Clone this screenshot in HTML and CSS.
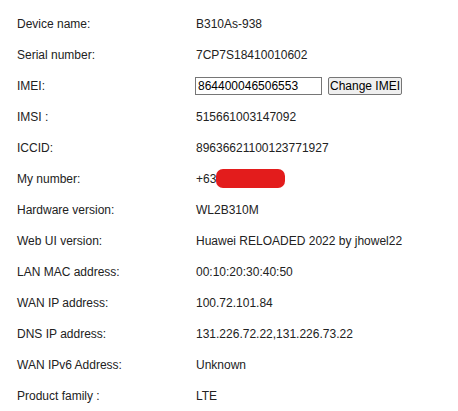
FILE: index.html
```html
<!DOCTYPE html>
<html>
<head>
<meta charset="utf-8">
<link rel="stylesheet" href="styles.css">
</head>
<body>
<div class="info">
  <div class="row"><span class="label">Device name:</span><span class="value">B310As-938</span></div>
  <div class="row"><span class="label">Serial number:</span><span class="value">7CP7S18410010602</span></div>
  <div class="row"><span class="label">IMEI:</span><span class="value imei"><input class="imei-input" type="text" value="864400046506553"><button class="imei-btn">Change IMEI</button></span></div>
  <div class="row"><span class="label">IMSI :</span><span class="value">515661003147092</span></div>
  <div class="row"><span class="label">ICCID:</span><span class="value">89636621100123771927</span></div>
  <div class="row"><span class="label">My number:</span><span class="value">+63<span class="redact"></span></span></div>
  <div class="row"><span class="label">Hardware version:</span><span class="value">WL2B310M</span></div>
  <div class="row"><span class="label">Web UI version:</span><span class="value">Huawei RELOADED 2022 by jhowel22</span></div>
  <div class="row"><span class="label">LAN MAC address:</span><span class="value">00:10:20:30:40:50</span></div>
  <div class="row"><span class="label">WAN IP address:</span><span class="value">100.72.101.84</span></div>
  <div class="row"><span class="label">DNS IP address:</span><span class="value">131.226.72.22,131.226.73.22</span></div>
  <div class="row"><span class="label">WAN IPv6 Address:</span><span class="value">Unknown</span></div>
  <div class="row"><span class="label">Product family :</span><span class="value">LTE</span></div>
</div>
</body>
</html>
```
FILE: styles.css
```css
html, body {
  margin: 0;
  padding: 0;
  background: #fff;
}
body {
  font-family: "Liberation Sans", Arial, sans-serif;
  font-size: 12px;
  color: #222;
}
.info {
  padding: 8px 0 0 17px;
}
.row {
  display: grid;
  grid-template-columns: 179px 1fr;
  align-items: center;
  height: 31px;
}
.value {
  display: flex;
  align-items: center;
}
.imei {
  gap: 6px;
}
.imei-input {
  box-sizing: border-box;
  width: 127px;
  height: 18px;
  margin: 0 0 0 -1px;
  padding: 0 2px;
  border: 1px solid #767676;
  font-family: "Liberation Sans", Arial, sans-serif;
  font-size: 12px;
  color: #000;
}
.imei-btn {
  box-sizing: border-box;
  width: 74px;
  height: 18px;
  margin: 0;
  padding: 0 1px;
  border: 1px solid #767676;
  border-radius: 2px;
  background: #efefef;
  font-family: "Liberation Sans", Arial, sans-serif;
  font-size: 12px;
  color: #000;
  overflow: hidden;
  white-space: nowrap;
  text-align: left;
}
.redact {
  display: inline-block;
  width: 69px;
  height: 19px;
  background: #e31c1c;
  border-radius: 7px;
}
```
